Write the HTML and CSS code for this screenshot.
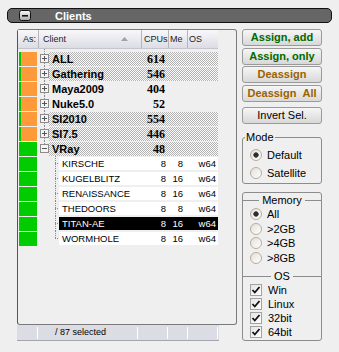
FILE: index.html
```html
<!DOCTYPE html>
<html lang="en">
<head>
    <meta charset="UTF-8">
    <title>Clients</title>
    <link rel="stylesheet" href="styles.css">
</head>
<body>
    <div class="titlebar">
        <svg class="collapse" width="12" height="11" viewBox="0 0 12 11">
            <defs>
                <linearGradient id="cg" x1="0" y1="0" x2="0" y2="1">
                    <stop offset="0" stop-color="#fafafa"/>
                    <stop offset="1" stop-color="#a8a8a8"/>
                </linearGradient>
            </defs>
            <rect x="0.5" y="0.5" width="11" height="10" rx="2" fill="url(#cg)" stroke="#111"/>
            <rect x="3" y="5" width="6" height="1.6" fill="#111"/>
        </svg>
        <span class="title">Clients</span>
    </div>

    <div class="main">
        <div class="left">
            <div class="panel">
                <div class="head">
                    <div class="hc h-as">As:</div>
                    <div class="hc h-client">Client
                        <svg class="sort" width="7" height="4" viewBox="0 0 7 4"><path d="M0 4L3.5 0L7 4Z" fill="#a0a0a8"/></svg>
                    </div>
                    <div class="hc h-cpu">CPUs</div>
                    <div class="hc h-me">Me</div>
                    <div class="hc h-os">OS</div>
                </div>

                <div class="rows">
                    <div class="row group">
                        <div class="as orange"></div>
                        <div class="tree"><svg width="9" height="9" viewBox="0 0 9 9"><rect x="0.5" y="0.5" width="8" height="8" fill="#f4f4f4" stroke="#8c8c8c"/><path d="M2 4.5h5M4.5 2v5" stroke="#555"/></svg></div>
                        <div class="cells"><span class="name">ALL</span><span class="cpu">614</span><span class="me"></span><span class="os"></span></div>
                    </div>
                    <div class="row group">
                        <div class="as orange"></div>
                        <div class="tree"><svg width="9" height="9" viewBox="0 0 9 9"><rect x="0.5" y="0.5" width="8" height="8" fill="#f4f4f4" stroke="#8c8c8c"/><path d="M2 4.5h5M4.5 2v5" stroke="#555"/></svg></div>
                        <div class="cells"><span class="name">Gathering</span><span class="cpu">546</span><span class="me"></span><span class="os"></span></div>
                    </div>
                    <div class="row group plain">
                        <div class="as orange"></div>
                        <div class="tree"><svg width="9" height="9" viewBox="0 0 9 9"><rect x="0.5" y="0.5" width="8" height="8" fill="#f4f4f4" stroke="#8c8c8c"/><path d="M2 4.5h5M4.5 2v5" stroke="#555"/></svg></div>
                        <div class="cells"><span class="name">Maya2009</span><span class="cpu">404</span><span class="me"></span><span class="os"></span></div>
                    </div>
                    <div class="row group plain">
                        <div class="as orange"></div>
                        <div class="tree"><svg width="9" height="9" viewBox="0 0 9 9"><rect x="0.5" y="0.5" width="8" height="8" fill="#f4f4f4" stroke="#8c8c8c"/><path d="M2 4.5h5M4.5 2v5" stroke="#555"/></svg></div>
                        <div class="cells"><span class="name">Nuke5.0</span><span class="cpu">52</span><span class="me"></span><span class="os"></span></div>
                    </div>
                    <div class="row group">
                        <div class="as orange"></div>
                        <div class="tree"><svg width="9" height="9" viewBox="0 0 9 9"><rect x="0.5" y="0.5" width="8" height="8" fill="#f4f4f4" stroke="#8c8c8c"/><path d="M2 4.5h5M4.5 2v5" stroke="#555"/></svg></div>
                        <div class="cells"><span class="name">SI2010</span><span class="cpu">554</span><span class="me"></span><span class="os"></span></div>
                    </div>
                    <div class="row group">
                        <div class="as orange"></div>
                        <div class="tree"><svg width="9" height="9" viewBox="0 0 9 9"><rect x="0.5" y="0.5" width="8" height="8" fill="#f4f4f4" stroke="#8c8c8c"/><path d="M2 4.5h5M4.5 2v5" stroke="#555"/></svg></div>
                        <div class="cells"><span class="name">SI7.5</span><span class="cpu">446</span><span class="me"></span><span class="os"></span></div>
                    </div>
                    <div class="row group">
                        <div class="as green"></div>
                        <div class="tree last"><svg width="9" height="9" viewBox="0 0 9 9"><rect x="0.5" y="0.5" width="8" height="8" fill="#f4f4f4" stroke="#8c8c8c"/><path d="M2 4.5h5" stroke="#555"/></svg></div>
                        <div class="cells"><span class="name">VRay</span><span class="cpu">48</span><span class="me"></span><span class="os"></span></div>
                    </div>

                    <div class="row child">
                        <div class="as green"></div>
                        <div class="tree"></div>
                        <div class="cells"><span class="name">KIRSCHE</span><span class="cpu">8</span><span class="me">8</span><span class="os">w64</span></div>
                    </div>
                    <div class="row child">
                        <div class="as green"></div>
                        <div class="tree"></div>
                        <div class="cells"><span class="name">KUGELBLITZ</span><span class="cpu">8</span><span class="me">16</span><span class="os">w64</span></div>
                    </div>
                    <div class="row child">
                        <div class="as green"></div>
                        <div class="tree"></div>
                        <div class="cells"><span class="name">RENAISSANCE</span><span class="cpu">8</span><span class="me">16</span><span class="os">w64</span></div>
                    </div>
                    <div class="row child">
                        <div class="as green"></div>
                        <div class="tree"></div>
                        <div class="cells"><span class="name">THEDOORS</span><span class="cpu">8</span><span class="me">8</span><span class="os">w64</span></div>
                    </div>
                    <div class="row child selected">
                        <div class="as green"></div>
                        <div class="tree"></div>
                        <div class="cells"><span class="name">TITAN-AE</span><span class="cpu">8</span><span class="me">16</span><span class="os">w64</span></div>
                    </div>
                    <div class="row child">
                        <div class="as green"></div>
                        <div class="tree last"></div>
                        <div class="cells"><span class="name">WORMHOLE</span><span class="cpu">8</span><span class="me">16</span><span class="os">w64</span></div>
                    </div>
                </div>
            </div>

            <div class="status">
                <div class="seg s1"></div>
                <div class="seg s2">/ 87 selected</div>
                <div class="seg s3"></div>
                <div class="seg s4"></div>
                <div class="seg s5"></div>
            </div>
        </div>

        <div class="right">
            <button class="btn assign">Assign, add</button>
            <button class="btn assign">Assign, only</button>
            <button class="btn deassign">Deassign</button>
            <button class="btn deassign">Deassign&nbsp;&nbsp;All</button>
            <button class="btn invert">Invert Sel.</button>

            <fieldset class="mode">
                <legend>Mode</legend>
                <div class="opt"><span class="radio on"></span>Default</div>
                <div class="opt"><span class="radio"></span>Satellite</div>
            </fieldset>

            <div class="groupbox">
                <div class="sep">Memory</div>
                <div class="opt small"><span class="radio on"></span>All</div>
                <div class="opt small"><span class="radio"></span>&gt;2GB</div>
                <div class="opt small"><span class="radio"></span>&gt;4GB</div>
                <div class="opt small"><span class="radio"></span>&gt;8GB</div>
                <div class="sep os-sep">OS</div>
                <div class="opt chk"><span class="check"><svg width="10" height="10" viewBox="0 0 10 10"><path d="M1.5 5l2.3 2.5L8.5 2" fill="none" stroke="#111" stroke-width="1.8"/></svg></span>Win</div>
                <div class="opt chk"><span class="check"><svg width="10" height="10" viewBox="0 0 10 10"><path d="M1.5 5l2.3 2.5L8.5 2" fill="none" stroke="#111" stroke-width="1.8"/></svg></span>Linux</div>
                <div class="opt chk"><span class="check"><svg width="10" height="10" viewBox="0 0 10 10"><path d="M1.5 5l2.3 2.5L8.5 2" fill="none" stroke="#111" stroke-width="1.8"/></svg></span>32bit</div>
                <div class="opt chk"><span class="check"><svg width="10" height="10" viewBox="0 0 10 10"><path d="M1.5 5l2.3 2.5L8.5 2" fill="none" stroke="#111" stroke-width="1.8"/></svg></span>64bit</div>
            </div>
        </div>
    </div>
</body>
</html>
```

FILE: styles.css
```css
body {
    margin: 0;
    background-color: #efefef;
    font-family: "Liberation Sans", Arial, sans-serif;
    font-size: 11px;
    color: #000;
}

* {
    box-sizing: border-box;
}

.titlebar {
    display: flex;
    align-items: center;
    width: 325px;
    height: 15px;
    margin: 8px 0 0 7px;
    padding-left: 11px;
    background-color: #666;
    border: 1px solid #111;
    border-radius: 5px;
}

.collapse {
    display: block;
}

.title {
    margin-left: 24px;
    color: #fff;
    font-weight: bold;
    font-size: 11px;
}

.main {
    display: flex;
    margin: 6px 0 0 17px;
}

.left {
    width: 220px;
}

.panel {
    height: 296px;
    border: 1px solid #7a7a7a;
    border-left-color: #555;
    border-radius: 3px;
}

/* list header */
.head {
    display: flex;
    width: 200px;
    height: 19px;
    background: linear-gradient(#f8f8fb, #dcdce4);
    border-bottom: 1px solid #c4c4cc;
}

.hc {
    height: 100%;
    line-height: 18px;
    font-size: 9px;
    color: #222;
    white-space: nowrap;
    overflow: hidden;
    border-left: 1px solid #b4b4bc;
}

.h-as {
    width: 20px;
    padding-left: 5px;
    border-left: none;
}

.h-client {
    display: flex;
    align-items: center;
    width: 103px;
    padding-left: 4px;
}

.sort {
    margin-left: auto;
    margin-right: 13px;
}

.h-cpu {
    width: 27px;
    padding-left: 2px;
}

.h-me {
    width: 19px;
    padding-left: 1px;
}

.h-os {
    width: 31px;
    padding-left: 1px;
}

/* rows */
.rows {
    width: 200px;
    padding-top: 2px;
    background: repeating-linear-gradient(#888 0 1px, transparent 1px 2px) 26px 0/1px 2px no-repeat;
}

.row {
    display: flex;
    height: 15px;
}

.as {
    width: 18px;
    height: 14px;
    margin: 1px 0 0 1px;
}

.as.orange {
    background-color: #ff9a3a;
    border-left: 2px solid #00c800;
}

.as.green {
    background-color: #00cc00;
}

.tree {
    display: flex;
    align-items: center;
    width: 12px;
    background: repeating-linear-gradient(#8a8a8a 0 1px, transparent 1px 2px) 7px 0/1px 100% no-repeat;
}

.tree svg {
    display: block;
    margin-left: 3px;
}

.group .tree.last {
    background-size: 1px 7px;
}

.cells {
    display: flex;
    height: 14px;
    margin-top: 1px;
    line-height: 14px;
    white-space: nowrap;
}

.group .cells {
    width: 169px;
    background: repeating-conic-gradient(#b2b2b2 0 25%, #fbfbfb 0 50%) 0 0/2px 2px;
}

.group.plain .cells {
    background: transparent;
}

.name {
    width: 92px;
    padding-left: 3px;
    overflow: hidden;
}

.group .name {
    font-weight: bold;
    font-size: 11px;
}

.cpu {
    width: 27px;
    padding-right: 3px;
    text-align: right;
}

.group .cpu {
    font-family: "Liberation Serif", "Times New Roman", serif;
    font-weight: bold;
    font-size: 12px;
}

.me {
    width: 19px;
    padding-right: 4px;
    text-align: right;
}

.os {
    width: 31px;
    padding-right: 2px;
    text-align: right;
}

.child .tree {
    width: 22px;
    background:
        repeating-linear-gradient(#8a8a8a 0 1px, transparent 1px 2px) 18px 0/1px 100% no-repeat,
        repeating-linear-gradient(90deg, #8a8a8a 0 1px, transparent 1px 2px) 18px 7px/4px 1px no-repeat;
}

.child .tree.last {
    background-size: 1px 8px, 4px 1px;
}

.child .cells {
    width: 159px;
    height: 13px;
    line-height: 13px;
    background-color: #fff;
    font-size: 9.5px;
}

.child .name {
    width: 82px;
}

.child .cpu {
    padding-right: 2px;
}

.child.selected .cells {
    background-color: #000;
    color: #fff;
}

/* status bar */
.status {
    display: flex;
    width: 202px;
    height: 16px;
    background-color: #dcdce4;
    border-bottom: 1px solid #a4a4ac;
    font-size: 9px;
    line-height: 11px;
}

.seg {
    height: 12px;
    margin-top: 2px;
    border-right: 1px solid #fff;
}

.s1 { width: 21px; }
.s2 { width: 100px; padding-left: 17px; }
.s3 { width: 30px; }
.s4 { width: 20px; }
.s5 { width: 30px; }

/* right side */
.right {
    width: 80px;
    margin-left: 5px;
}

.btn {
    display: block;
    width: 80px;
    height: 17px;
    margin: 0 0 1.5px;
    padding: 0;
    border: 1px solid #9a9a9a;
    border-radius: 3px;
    background: linear-gradient(#f6f6f6, #d8d8d8);
    font-family: "Liberation Sans", Arial, sans-serif;
    font-weight: bold;
    font-size: 11px;
    line-height: 15px;
    text-align: center;
}

.btn.assign {
    color: #006a00;
}

.btn.deassign {
    color: #9c6200;
}

.btn.invert {
    margin-top: 5.5px;
    font-weight: normal;
    color: #000;
}

.mode {
    margin: 7px 0 0;
    padding: 2px 0 1px;
    border: 1px solid #8c8c8c;
    border-radius: 3px;
}

.mode legend {
    margin-left: 2px;
    padding: 0 1px;
    font-size: 11px;
    line-height: 13px;
}

.opt {
    display: flex;
    align-items: center;
    height: 18px;
    padding-left: 7px;
}

.opt.small {
    height: 14.5px;
}

.opt.chk {
    height: 14px;
}

.radio {
    width: 12px;
    height: 12px;
    margin-right: 5px;
    border: 1px solid #b8ad9b;
    border-radius: 50%;
    background: linear-gradient(135deg, #e2e0da, #ffffff);
}

.radio.on {
    background:
        radial-gradient(circle at 50% 50%, #2e2e2e 0 2px, #7a7a7a 2.6px, transparent 3px),
        linear-gradient(135deg, #e2e0da, #ffffff);
}

.check {
    display: flex;
    align-items: center;
    justify-content: center;
    width: 12px;
    height: 12px;
    margin-right: 6px;
    border: 1px solid #a2a2a2;
    background: linear-gradient(135deg, #e4e4e4, #ffffff);
}

.groupbox {
    margin-top: 8px;
    padding-bottom: 1px;
    border: 1px solid #8c8c8c;
    border-radius: 3px;
}

.sep {
    display: flex;
    align-items: center;
    gap: 3px;
    height: 14px;
}

.sep::before,
.sep::after {
    content: "";
    flex: 1;
    border-top: 1px solid #8c8c8c;
}

.os-sep {
    height: 13px;
    margin-top: 4.5px;
}
```
